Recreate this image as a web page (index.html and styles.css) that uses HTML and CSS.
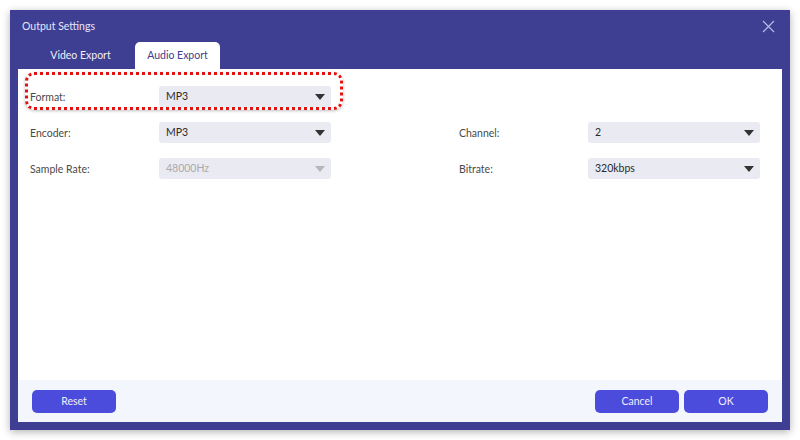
FILE: index.html
```html
<!DOCTYPE html>
<html lang="en">
<head>
  <meta charset="UTF-8" />
  <title>Output Settings</title>
  <link rel="stylesheet" href="styles.css">
</head>
<body>

  <div class="dialog">
    <!-- Title bar -->
    <div class="titlebar">
      <span class="title">Output Settings</span>
      <svg class="close" width="13" height="13" viewBox="0 0 13 13">
        <path d="M1 1 L12 12 M12 1 L1 12" stroke="#b9b9e4" stroke-width="1.2" fill="none"/>
      </svg>
    </div>

    <!-- Tabs -->
    <div class="tabs">
      <div class="tab">Video Export</div>
      <div class="tab active">Audio Export</div>
    </div>

    <!-- Form body -->
    <div class="body">
      <div class="highlight"></div>
      <div class="grid">
        <div class="field">
          <label>Format:</label>
          <div class="select">MP3<span class="caret"></span></div>
        </div>
        <div></div>

        <div class="field">
          <label>Encoder:</label>
          <div class="select">MP3<span class="caret"></span></div>
        </div>
        <div class="field">
          <label>Channel:</label>
          <div class="select">2<span class="caret"></span></div>
        </div>

        <div class="field">
          <label>Sample Rate:</label>
          <div class="select disabled">48000Hz<span class="caret"></span></div>
        </div>
        <div class="field">
          <label>Bitrate:</label>
          <div class="select">320kbps<span class="caret"></span></div>
        </div>
      </div>
    </div>

    <!-- Footer -->
    <div class="footer">
      <button class="btn">Reset</button>
      <div class="right">
        <button class="btn">Cancel</button>
        <button class="btn">OK</button>
      </div>
    </div>
  </div>

</body>
</html>
```

FILE: styles.css
```css
* { box-sizing: border-box; }
body {
  margin: 0;
  padding: 10px;
  background-color: #fff;
  font-family: Lato, 'Noto Sans', sans-serif;
  font-size: 10.5px;
  color: #444;
}

.dialog {
  width: 780px;
  height: 420px;
  background-color: #3e3f93;
  padding: 0 8px 8px 8px;
  display: flex;
  flex-direction: column;
  box-shadow: 0 2px 8px rgba(0, 0, 0, 0.3);
}

/* Title bar */
.titlebar {
  height: 32px;
  display: flex;
  align-items: center;
  justify-content: space-between;
  padding: 0 7px 0 4px;
}

.title {
  color: #e6e6f8;
  font-size: 10.5px;
}

/* Tabs */
.tabs {
  height: 27px;
  display: flex;
  align-items: flex-end;
  gap: 12px;
  padding-left: 20px;
}

.tab {
  width: 85px;
  height: 27px;
  line-height: 27px;
  text-align: center;
  color: #f0f0fa;
}

.tab.active {
  background-color: #fff;
  color: #40408e;
  border-radius: 5px 5px 0 0;
}

/* Body */
.body {
  flex: 1;
  background-color: #fff;
  position: relative;
  padding: 17px 22px 0 12px;
}

.highlight {
  position: absolute;
  left: 7px;
  top: 3px;
  width: 318px;
  height: 38px;
  border: 3px dotted #e51010;
  border-radius: 9px;
  box-shadow: 0 1px 3px rgba(0, 0, 0, 0.25);
}

.grid {
  display: grid;
  grid-template-columns: 301px 301px;
  justify-content: space-between;
  row-gap: 15px;
}

.field {
  display: flex;
  align-items: center;
  height: 21px;
}

.field label {
  width: 129px;
  color: #4a4a4a;
}

.select {
  flex: 1;
  height: 21px;
  line-height: 21px;
  background-color: #eaeaf2;
  border-radius: 3px;
  padding-left: 7px;
  color: #2a2a2a;
  position: relative;
}

.select.disabled { color: #aaa; }

.caret {
  position: absolute;
  right: 6px;
  top: 8px;
  border-left: 5px solid transparent;
  border-right: 5px solid transparent;
  border-top: 6px solid #333;
}

.select.disabled .caret { border-top-color: #b5b5bb; }

/* Footer */
.footer {
  height: 42px;
  background-color: #f3f6fc;
  display: flex;
  align-items: center;
  justify-content: space-between;
  padding: 0 14px;
}

.right {
  display: flex;
  gap: 5px;
}

.btn {
  width: 84px;
  height: 23px;
  border: none;
  border-radius: 5px;
  background-color: #4c4cdc;
  color: #eef;
  font-family: inherit;
  font-size: 10.5px;
  cursor: pointer;
}
```
